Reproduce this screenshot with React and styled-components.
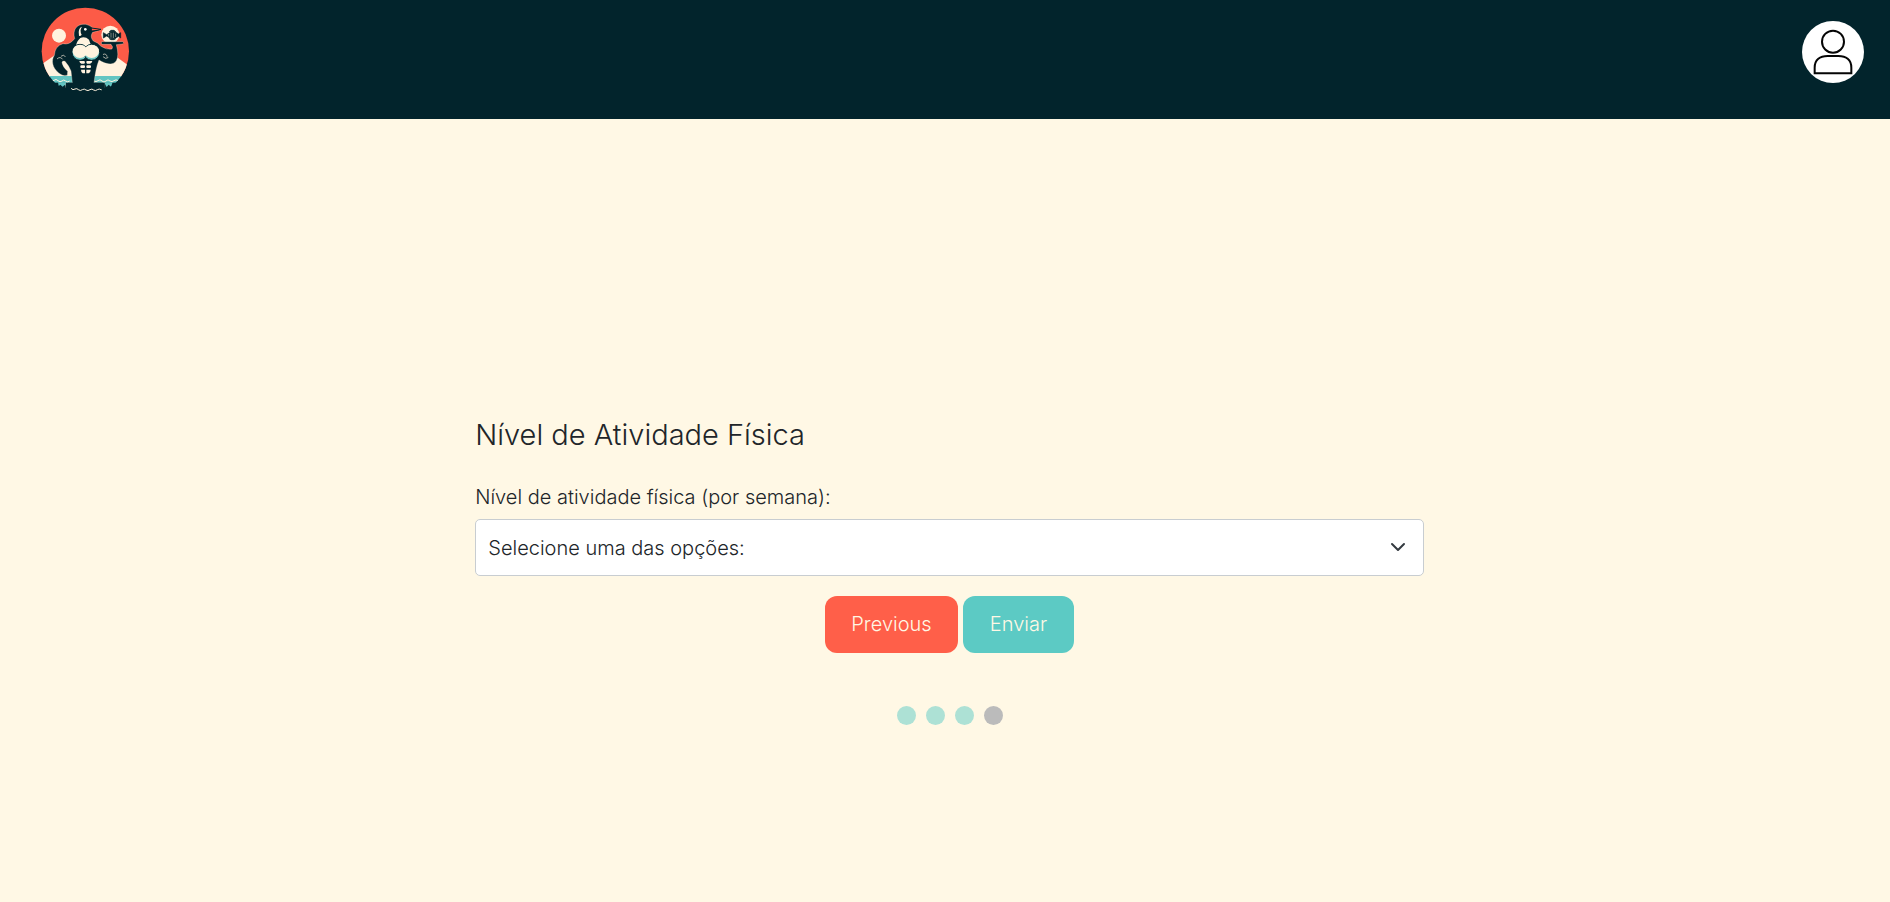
import React from "react";
import styled, { createGlobalStyle } from "styled-components";

const GlobalStyle = createGlobalStyle`
  *, *::before, *::after { box-sizing: border-box; }
  body {
    margin: 0;
    background: #fff8e5;
    color: #212529;
    font-family: Inter, "Open Sans", sans-serif;
    font-weight: 300;
  }
`;

const Header = styled.header`
  display: flex;
  justify-content: space-between;
  align-items: flex-start;
  height: 119px;
  padding: 6px 26px 0 40px;
  background: #02242c;
`;

const HomeLink = styled.a`
  display: block;
  line-height: 0;
`;

const ProfileButton = styled.button`
  width: 62px;
  height: 62px;
  margin-top: 15px;
  padding: 0;
  border: 0;
  border-radius: 50%;
  background: #fff;
  line-height: 0;
  cursor: pointer;
`;

const Main = styled.main`
  display: flex;
  justify-content: center;
  padding: 296px 0 32px 9px;
`;

const Form = styled.form`
  width: calc(50% + 8px);
`;

const Title = styled.h1`
  margin: 0 0 28px;
  font-size: 29px;
  line-height: 40px;
  font-weight: 300;
`;

const Label = styled.label`
  display: block;
  margin-bottom: 7px;
  font-size: 20px;
  line-height: 29px;
`;

const SelectWrap = styled.div`
  position: relative;
  margin-bottom: 20px;
`;

const Select = styled.select`
  display: block;
  width: 100%;
  height: 57px;
  padding: 0 48px 0 12px;
  border: 1px solid #c8cdd1;
  border-radius: 5px;
  background: #fff;
  color: #212529;
  font: inherit;
  font-size: 20px;
  appearance: none;
`;

const Chevron = styled.svg`
  position: absolute;
  top: 20px;
  right: 18px;
  pointer-events: none;
`;

const Actions = styled.div`
  display: flex;
  justify-content: center;
  gap: 5px;
`;

const Button = styled.button`
  width: ${({ $width }) => $width}px;
  height: 57px;
  padding: 0 0 2px;
  border: 0;
  border-radius: 12px;
  background: ${({ $color }) => $color};
  color: #fff8e5;
  font: inherit;
  font-size: 20px;
  cursor: pointer;
`;

const Steps = styled.div`
  display: flex;
  justify-content: center;
  gap: 10px;
  margin-top: 53px;
`;

const Step = styled.span`
  width: 19px;
  height: 19px;
  border-radius: 50%;
  background: ${({ $done }) => ($done ? "#ade1d5" : "#bbb")};
`;

const NAVY = "#02242c";
const CREAM = "#fff3df";
const TEAL = "#63c5c2";

function Logo() {
  return (
    <svg width="90" height="90" viewBox="30 18 270 270" role="img" aria-label="Início">
      <defs>
        <clipPath id="sun"><circle cx="166" cy="154" r="131" /></clipPath>
      </defs>
      <g clipPath="url(#sun)">
        <rect x="30" y="18" width="270" height="212" fill="#fc5b47" />
        <path d="M30 196L75 165H252L300 200V230H30Z" fill={CREAM} />
        <rect x="30" y="228" width="270" height="20" fill={TEAL} />
        <path d="M84 247H114L113 260L104 255L98 260L91 254L86 258Z M218 247H248L243 260L236 254L230 261L225 252L219 257Z" fill={TEAL} />
        <path d="M50 241q5 -5 10 0q6 5 12 0q6 -6 12 1q6 6 12 1q5 -6 11 0q6 5 12 0 M192 243q6 4 12 -1q6 -6 12 1q6 6 12 0q6 -7 12 0q6 4 12 -1q6 -5 12 0q6 4 12 0" fill="none" stroke={CREAM} strokeWidth="3" />
      </g>
      <circle cx="87" cy="107" r="21" fill={CREAM} />
      <circle cx="241" cy="104" r="27" fill={CREAM} />
      <path
        d="M134 116C126 87 143 70 167 73C178 75 185 81 190 85L213 88Q207 92 188 97C181 108 184 116 190 123Q205 128 213 139Q228 150 246 147Q250 140 243 133H216Q211 129 216 125H278Q285 129 277 132L259 134Q268 168 259 182C249 199 224 191 207 180Q197 205 192 249H224V262H107V249H127L123 213Q116 196 105 184Q96 181 96 188Q99 202 113 214L112 226Q99 230 87 220C66 203 63 181 73 166Q75 137 99 131Q118 136 134 116Z"
        fill={NAVY} stroke={CREAM} strokeWidth="1"
      />
      <path d="M108 248H224V268H108Z" fill={NAVY} />
      <path d="M184 84L213 88Q205 92 184 93Z" fill="#fc5b47" stroke={NAVY} strokeWidth="3" />
      <path d="M147 107Q143 84 156 80Q148 91 155 104Q151 110 147 107Z" fill={CREAM} />
      <circle cx="166" cy="88" r="4" fill="#fff" />
      <path d="M151 114Q165 108 177 119L184 138H138Q140 123 151 114Z" fill={CREAM} />
      <circle cx="150" cy="157" r="24" fill="#70c8c5" stroke={NAVY} strokeWidth="3" />
      <circle cx="185" cy="157" r="24" fill="#70c8c5" stroke={NAVY} strokeWidth="3" />
      <ellipse cx="150" cy="154" rx="22" ry="20" fill={CREAM} />
      <ellipse cx="185" cy="154" rx="22" ry="20" fill={CREAM} />
      <g fill={CREAM}>
        <path d="M148 183H163Q167 186 163 191H154Q149 189 148 183Z M170 183H187Q186 189 180 191H171Q167 186 170 183Z" />
        <rect x="151" y="196" width="14" height="8" rx="3" />
        <rect x="169" y="196" width="14" height="8" rx="3" />
        <path d="M153 209H165V220H158Q153 216 153 209Z M169 209H182Q182 217 176 220H169Z" />
      </g>
      <g fill="none" stroke={CREAM} strokeWidth="2" strokeLinecap="round">
        <path d="M94 168Q102 161 106 170 M82 176Q91 168 97 177 M220 171Q227 179 234 173 M220 163Q229 159 231 169" />
        <path strokeWidth="3" d="M124 266q5 6 11 1q6 -3 10 2q6 5 12 0q6 -4 11 1q6 4 12 -1q6 -4 11 1q6 4 11 -1q5 -4 12 0" />
      </g>
      <g fill={NAVY} stroke={NAVY} strokeWidth="2" strokeLinejoin="round">
        <path d="M220 98L230 104Q248 88 266 102L272 98V114L266 109Q248 123 230 108L220 114Z" />
        <path d="M238 95L243 91H252L257 95Z M238 116L243 119H252L257 116Z" />
        <path d="M236 102V109M243 99V113M250 98V114M257 101V111" stroke="#b9b8ab" />
      </g>
    </svg>
  );
}

function PersonIcon() {
  return (
    <svg width="62" height="62" viewBox="66 64 186 186" fill="none" stroke="#050505" strokeWidth="6" aria-hidden="true">
      <circle cx="159" cy="126" r="33" />
      <path d="M104 221V204C104 180 120 169 143 169H175C198 169 214 180 214 204V221Z" />
    </svg>
  );
}

const steps = [true, true, true, false];

export default function App() {
  return (
    <>
      <GlobalStyle />
      <Header>
        <HomeLink href="#"><Logo /></HomeLink>
        <ProfileButton type="button" aria-label="Perfil"><PersonIcon /></ProfileButton>
      </Header>
      <Main>
        <Form onSubmit={(e) => e.preventDefault()}>
          <Title>Nível de Atividade Física</Title>
          <Label htmlFor="activity">Nível de atividade física (por semana):</Label>
          <SelectWrap>
            <Select id="activity" defaultValue="">
              <option value="">Selecione uma das opções:</option>
            </Select>
            <Chevron width="16" height="16" viewBox="0 0 16 16" fill="none" stroke="#343a40" strokeWidth="2" strokeLinecap="round" strokeLinejoin="round" aria-hidden="true">
              <path d="m2 5 6 6 6-6" />
            </Chevron>
          </SelectWrap>
          <Actions>
            <Button type="button" $color="#ff5f49" $width={133}>Previous</Button>
            <Button type="submit" $color="#5ccac4" $width={111}>Enviar</Button>
          </Actions>
          <Steps>
            {steps.map((done, i) => <Step key={i} $done={done} />)}
          </Steps>
        </Form>
      </Main>
    </>
  );
}
